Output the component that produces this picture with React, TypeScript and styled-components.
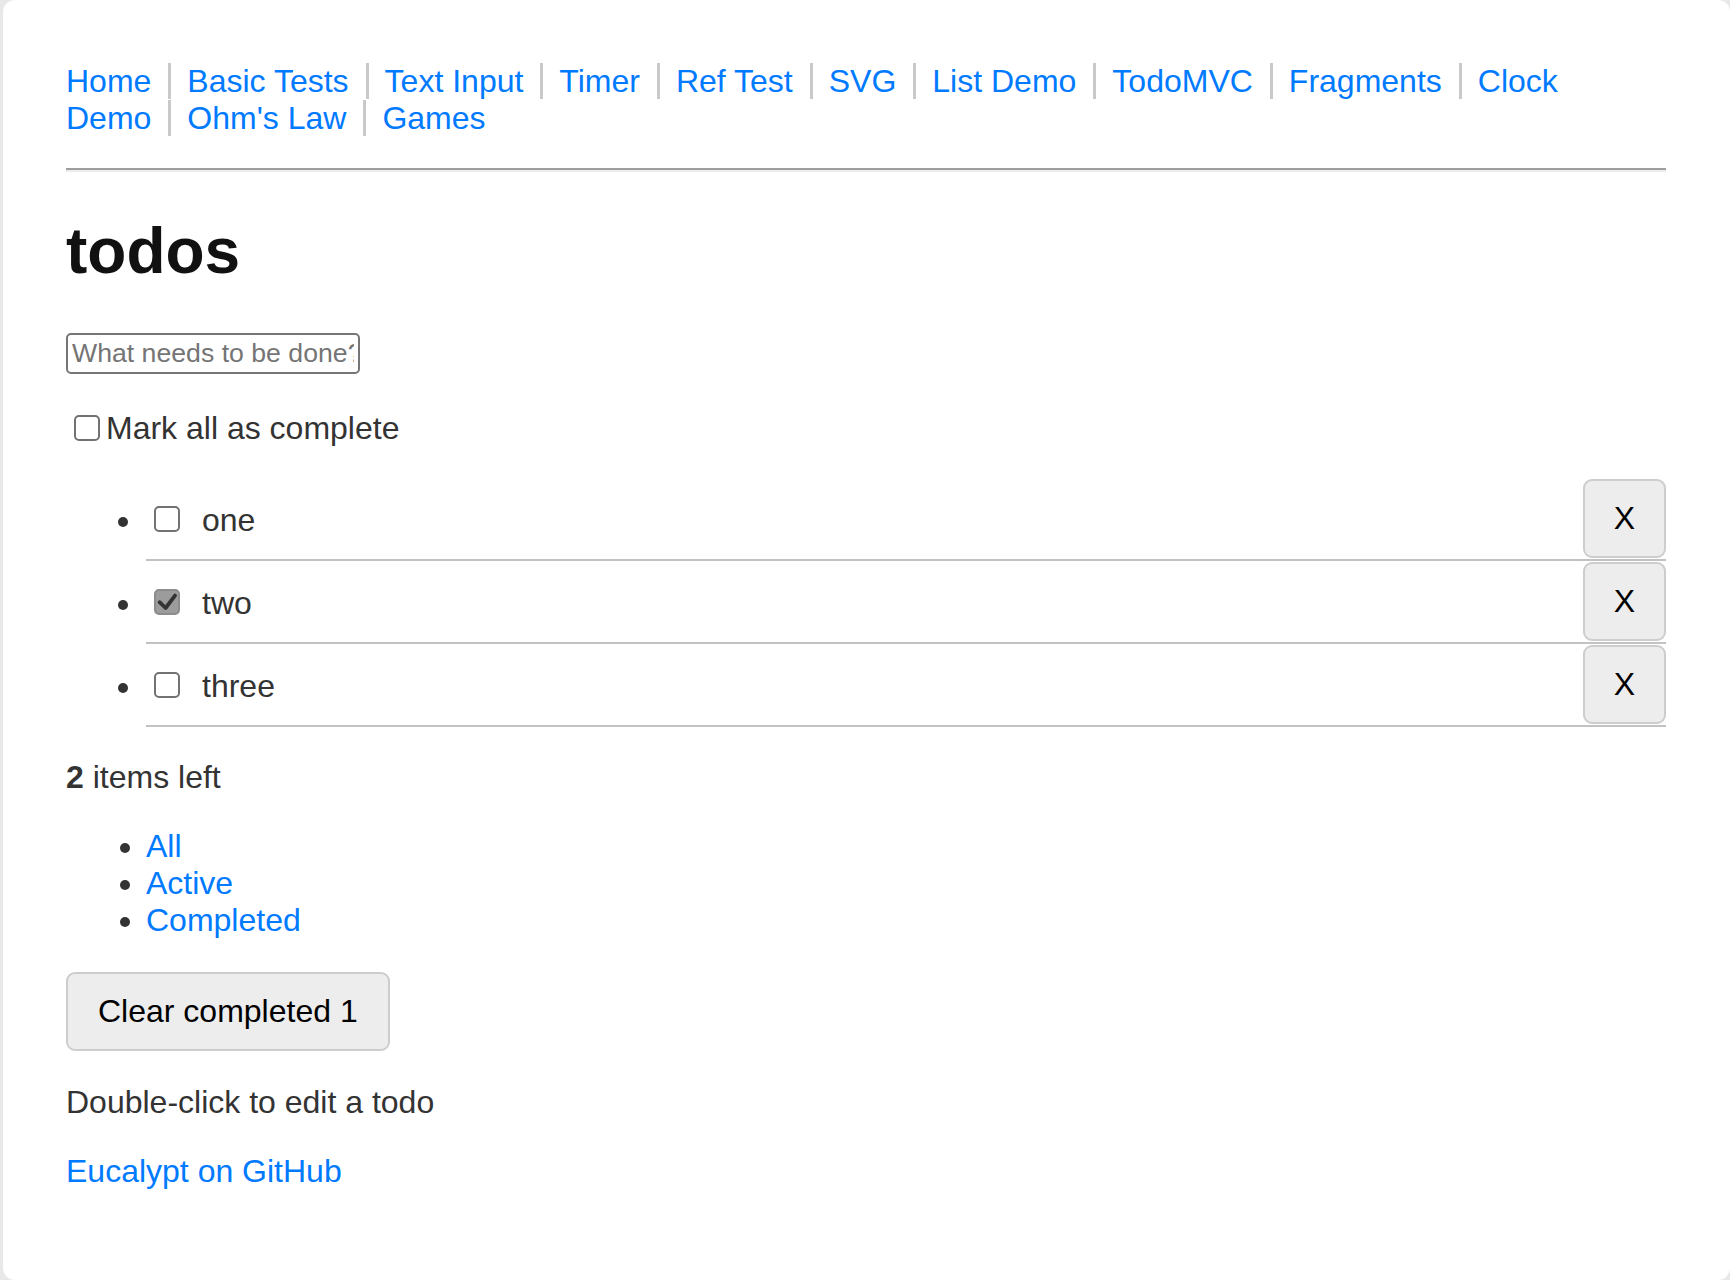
import React, {useState} from "react";
import styled, {createGlobalStyle} from "styled-components";

const GlobalStyle = createGlobalStyle`
  html, body {
    margin: 0;
    padding: 0;
    background: #e8e8e8;
  }
  body {
    font-family: "Liberation Sans", Arial, Helvetica, sans-serif;
    font-size: 32px;
    color: #333;
  }
`;

const Frame = styled.div`
  margin-left: 3px;
  min-height: 1280px;
  background: #fff;
  border-radius: 12px;
  box-sizing: border-box;
  padding: 63px 0 0 63px;
`;

const Container = styled.div`
  width: 1600px;
`;

const Nav = styled.nav`
  padding-right: 40px;
  margin-bottom: 31px;
  line-height: normal;
`;

const NavLink = styled.a`
  display: inline;
  color: #007aff;
  text-decoration: none;
  padding: 0 17px 0 0;
  & + & {
    border-left: 3px solid #c9c9c9;
    padding-left: 16px;
  }
`;

const Rule = styled.hr`
  height: 0;
  margin: 0;
  border: none;
  border-top: 2px solid #9e9e9e;
  border-bottom: 2px solid #ececec;
`;

const Title = styled.h1`
  margin: 42.4px 0 45px;
  font-size: 64px;
  font-weight: bold;
  line-height: normal;
  color: #111;
`;

const NewTodo = styled.input`
  display: block;
  box-sizing: border-box;
  width: 294px;
  height: 41px;
  margin: 0;
  padding: 0 4px;
  border: 2px solid #767676;
  border-radius: 5px;
  font-family: inherit;
  font-size: 26.67px;
  color: #333;
  &::placeholder {
    color: #757575;
  }
  &:focus {
    outline: none;
  }
`;

const MarkAll = styled.label`
  display: flex;
  align-items: center;
  margin-top: 35.5px;
  line-height: normal;
  cursor: pointer;
`;

interface BoxProps {
  $checked?: boolean;
}
const Box = styled.span<BoxProps>`
  display: inline-flex;
  align-items: center;
  justify-content: center;
  flex-shrink: 0;
  box-sizing: border-box;
  width: 26px;
  height: 26px;
  margin: 0 6px 0 8px;
  border: 2px solid ${props => (props.$checked ? "#8c8c8c" : "#727272")};
  border-radius: 5px;
  background: ${props => (props.$checked ? "#9c9c9c" : "#fff")};
  cursor: pointer;
`;

const TodoList = styled.ul`
  margin: 31.2px 0 32px;
  padding-left: 80px;
  list-style: none;
`;

const TodoRow = styled.li`
  display: flex;
  align-items: center;
  min-height: 81px;
  border-bottom: 2px solid #c2c2c2;
  &::before {
    content: "";
    flex-shrink: 0;
    width: 10px;
    height: 10px;
    margin: 6px 17.7px 0 -27.7px;
    border-radius: 50%;
    background: #333;
  }
`;

const TodoText = styled.span`
  flex: 1;
  margin-left: 16px;
  padding-top: 3.5px;
  line-height: normal;
`;

const Button = styled.button`
  box-sizing: border-box;
  height: 79px;
  padding: 0 29px;
  border: 2px solid #cdcdcd;
  border-radius: 9px;
  background: #ededed;
  font-family: inherit;
  font-size: 32px;
  color: #000;
  cursor: pointer;
`;

const DestroyButton = styled(Button)`
  width: 83px;
  padding: 0;
  margin-left: auto;
`;

const ClearButton = styled(Button)`
  display: block;
  margin-top: 32.5px;
  padding: 0 30px;
`;

const Count = styled.p`
  margin: 0;
  line-height: normal;
`;

const Filters = styled.ul`
  margin: 32px 0 0;
  padding-left: 80px;
  line-height: normal;
  a {
    color: #007aff;
    text-decoration: none;
  }
`;

const Hint = styled.p`
  margin: 33.5px 0 0;
  line-height: normal;
`;

const Footer = styled.p`
  margin: 32px 0 0;
  line-height: normal;
  a {
    color: #007aff;
    text-decoration: none;
  }
`;

const CheckMark = () => (
  <svg width="22" height="22" viewBox="0 0 22 22">
    <path
      d="M3.6 11.2 L9.6 17 L19 4.6"
      fill="none"
      stroke="#333"
      strokeWidth="3.8"
      strokeLinecap="round"
      strokeLinejoin="round"
    />
  </svg>
);

interface Todo {
  id: number;
  title: string;
  done: boolean;
}

const navItems = [
  "Home",
  "Basic Tests",
  "Text Input",
  "Timer",
  "Ref Test",
  "SVG",
  "List Demo",
  "TodoMVC",
  "Fragments",
  "Clock Demo",
  "Ohm's Law",
  "Games"
];

const App = () => {
  const [todos, setTodos] = useState<Todo[]>([
    {id: 1, title: "one", done: false},
    {id: 2, title: "two", done: true},
    {id: 3, title: "three", done: false}
  ]);
  const [text, setText] = useState("");
  const left = todos.filter(t => !t.done).length;
  const completed = todos.length - left;
  const allDone = todos.length > 0 && left === 0;

  const toggle = (id: number) => {
    setTodos(todos.map(t => (t.id === id ? {...t, done: !t.done} : t)));
  };
  const remove = (id: number) => {
    setTodos(todos.filter(t => t.id !== id));
  };
  const markAll = () => {
    setTodos(todos.map(t => ({...t, done: !allDone})));
  };
  const submit = (e: React.KeyboardEvent<HTMLInputElement>) => {
    if (e.key !== "Enter" || !text.trim()) return;
    setTodos([...todos, {id: Date.now(), title: text.trim(), done: false}]);
    setText("");
  };

  return (
    <Frame>
      <GlobalStyle />
      <Container>
        <Nav>
          {navItems.map(name => (
            <NavLink key={name} href="#">
              {name}
            </NavLink>
          ))}
        </Nav>
        <Rule />
        <Title>todos</Title>
        <NewTodo
          placeholder="What needs to be done?"
          value={text}
          onChange={e => setText(e.currentTarget.value)}
          onKeyDown={submit}
        />
        <MarkAll onClick={markAll}>
          <Box $checked={allDone}>{allDone && <CheckMark />}</Box>
          Mark all as complete
        </MarkAll>
        <TodoList>
          {todos.map(todo => (
            <TodoRow key={todo.id}>
              <Box $checked={todo.done} onClick={() => toggle(todo.id)}>
                {todo.done && <CheckMark />}
              </Box>
              <TodoText>{todo.title}</TodoText>
              <DestroyButton onClick={() => remove(todo.id)}>X</DestroyButton>
            </TodoRow>
          ))}
        </TodoList>
        <Count>
          <strong>{left}</strong> items left
        </Count>
        <Filters>
          <li><a href="#">All</a></li>
          <li><a href="#">Active</a></li>
          <li><a href="#">Completed</a></li>
        </Filters>
        <ClearButton
          onClick={() => setTodos(todos.filter(t => !t.done))}
        >
          Clear completed {completed}
        </ClearButton>
        <Hint>Double-click to edit a todo</Hint>
        <Footer>
          <a href="#">Eucalypt on GitHub</a>
        </Footer>
      </Container>
    </Frame>
  );
};

export default App;
